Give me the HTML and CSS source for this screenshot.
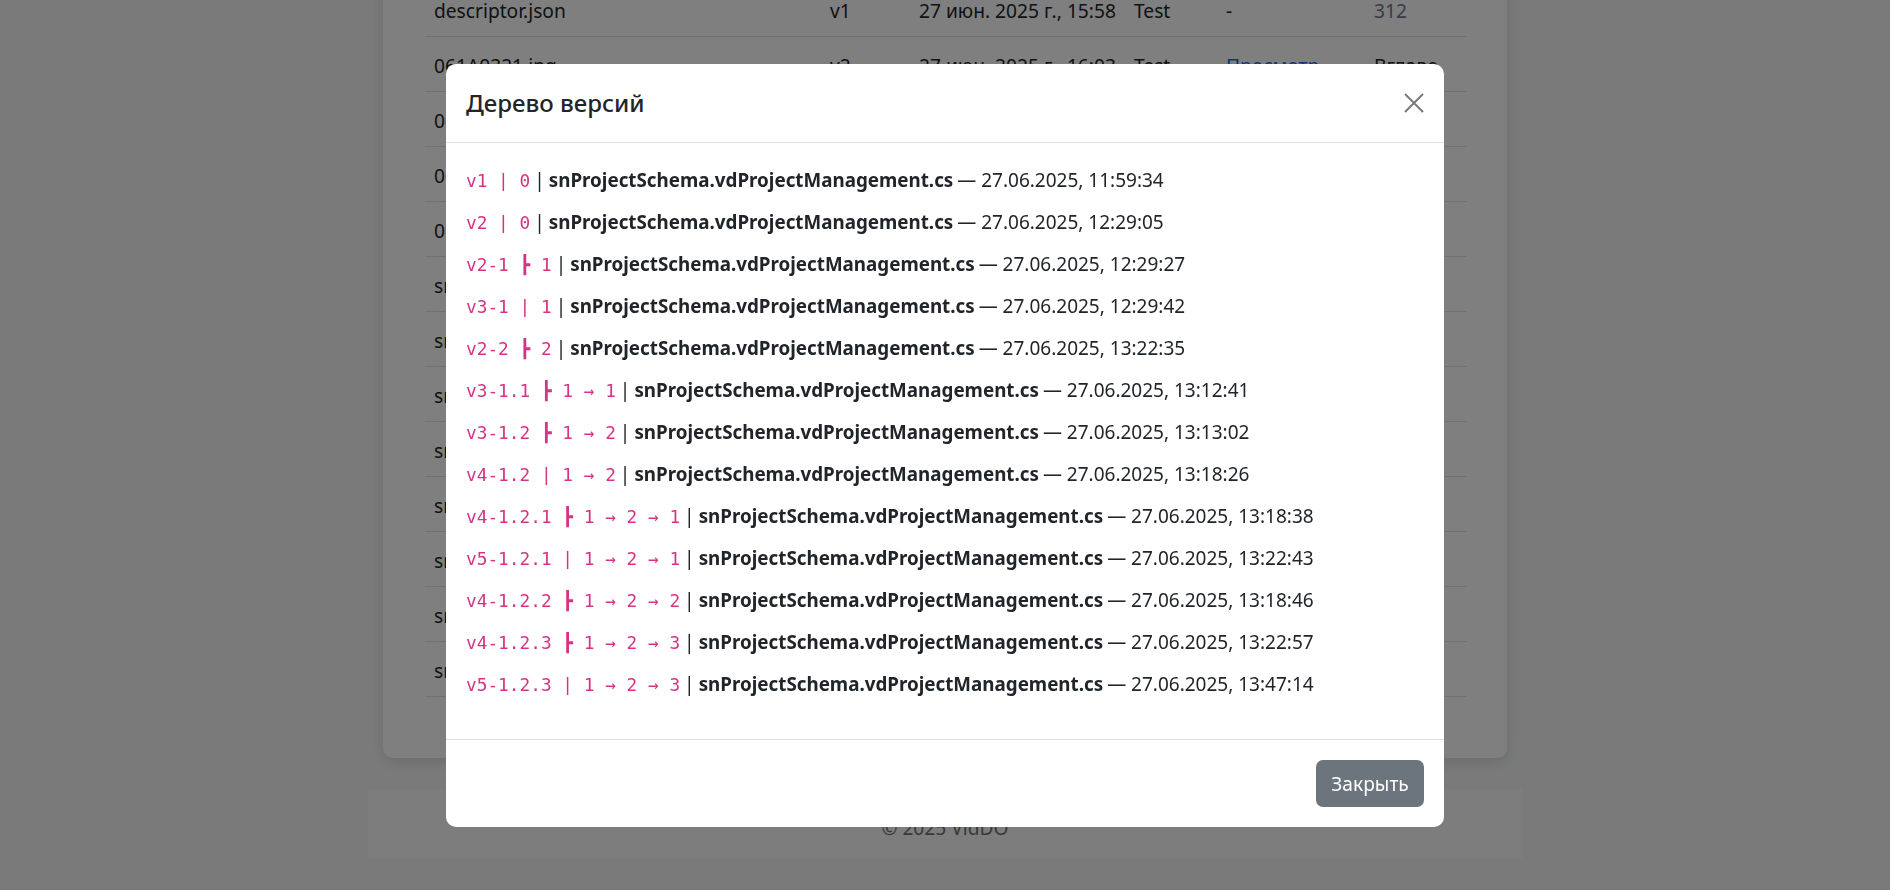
FILE: index.html
```html
<!DOCTYPE html>
<html lang="ru">
<head>
<meta charset="utf-8">
<title>Дерево версий</title>
<link rel="stylesheet" href="styles.css">
</head>
<body>
<div class="page">
  <div class="card">
    <div class="table">
      <div class="trow"><div class="c c1">descriptor.json</div><div class="c c2">v1</div><div class="c c3">27 июн. 2025 г., 15:58</div><div class="c c4">Test</div><div class="c c5">-</div><div class="c c6 muted">312</div></div>
      <div class="trow"><div class="c c1">061A0321.jpg</div><div class="c c2">v2</div><div class="c c3">27 июн. 2025 г., 16:03</div><div class="c c4">Test</div><div class="c c5"><span class="link">Просмотр</span></div><div class="c c6">Вглаво</div></div>
      <div class="trow"><div class="c c1">061A0322.jpg</div><div class="c c2">v1</div><div class="c c3">27 июн. 2025 г., 16:03</div><div class="c c4">Test</div><div class="c c5"><span class="link">Просмотр</span></div><div class="c c6">Вглаво</div></div>
      <div class="trow"><div class="c c1">061A0323.jpg</div><div class="c c2">v1</div><div class="c c3">27 июн. 2025 г., 16:03</div><div class="c c4">Test</div><div class="c c5"><span class="link">Просмотр</span></div><div class="c c6">Вглаво</div></div>
      <div class="trow"><div class="c c1">061A0324.jpg</div><div class="c c2">v1</div><div class="c c3">27 июн. 2025 г., 16:03</div><div class="c c4">Test</div><div class="c c5"><span class="link">Просмотр</span></div><div class="c c6">Вглаво</div></div>
      <div class="trow"><div class="c c1">snProjectSchema.vdProjectManagement.cs</div><div class="c c2">v1</div><div class="c c3">27 июн. 2025 г., 11:59</div><div class="c c4">Test</div><div class="c c5">-</div><div class="c c6">-</div></div>
      <div class="trow"><div class="c c1">snProjectSchema.vdProjectManagement.cs</div><div class="c c2">v2</div><div class="c c3">27 июн. 2025 г., 12:29</div><div class="c c4">Test</div><div class="c c5">-</div><div class="c c6">-</div></div>
      <div class="trow"><div class="c c1">snProjectSchema.vdProjectManagement.cs</div><div class="c c2">v2-1</div><div class="c c3">27 июн. 2025 г., 12:29</div><div class="c c4">Test</div><div class="c c5">-</div><div class="c c6">-</div></div>
      <div class="trow"><div class="c c1">snProjectSchema.vdProjectManagement.cs</div><div class="c c2">v3-1</div><div class="c c3">27 июн. 2025 г., 12:29</div><div class="c c4">Test</div><div class="c c5">-</div><div class="c c6">-</div></div>
      <div class="trow"><div class="c c1">snProjectSchema.vdProjectManagement.cs</div><div class="c c2">v2-2</div><div class="c c3">27 июн. 2025 г., 13:22</div><div class="c c4">Test</div><div class="c c5">-</div><div class="c c6">-</div></div>
      <div class="trow"><div class="c c1">snProjectSchema.vdProjectManagement.cs</div><div class="c c2">v3-1.1</div><div class="c c3">27 июн. 2025 г., 13:12</div><div class="c c4">Test</div><div class="c c5">-</div><div class="c c6">-</div></div>
      <div class="trow"><div class="c c1">snProjectSchema.vdProjectManagement.cs</div><div class="c c2">v3-1.2</div><div class="c c3">27 июн. 2025 г., 13:13</div><div class="c c4">Test</div><div class="c c5">-</div><div class="c c6">-</div></div>
      <div class="trow"><div class="c c1">snProjectSchema.vdProjectManagement.cs</div><div class="c c2">v4-1.2</div><div class="c c3">27 июн. 2025 г., 13:18</div><div class="c c4">Test</div><div class="c c5">-</div><div class="c c6">-</div></div>
    </div>
  </div>
  <footer class="footer">© 2025 VidDO</footer>
</div>

<div class="backdrop"></div>

<div class="modal">
  <div class="dialog">
    <div class="mheader">
      <h5 class="mtitle">Дерево версий</h5>
      <button class="close" type="button" aria-label="Close">
        <svg width="20" height="20" viewBox="0 0 20 20"><path d="M1 1L19 19M19 1L1 19" stroke="#7a7a7a" stroke-width="2" fill="none"/></svg>
      </button>
    </div>
    <div class="mbody">
      <div class="vrow"><code class="tag">v1 | 0</code> | <b>snProjectSchema.vdProjectManagement.cs</b> <span class="date">— 27.06.2025, 11:59:34</span></div>
      <div class="vrow"><code class="tag">v2 | 0</code> | <b>snProjectSchema.vdProjectManagement.cs</b> <span class="date">— 27.06.2025, 12:29:05</span></div>
      <div class="vrow"><code class="tag">v2-1 ┣ 1</code> | <b>snProjectSchema.vdProjectManagement.cs</b> <span class="date">— 27.06.2025, 12:29:27</span></div>
      <div class="vrow"><code class="tag">v3-1 | 1</code> | <b>snProjectSchema.vdProjectManagement.cs</b> <span class="date">— 27.06.2025, 12:29:42</span></div>
      <div class="vrow"><code class="tag">v2-2 ┣ 2</code> | <b>snProjectSchema.vdProjectManagement.cs</b> <span class="date">— 27.06.2025, 13:22:35</span></div>
      <div class="vrow"><code class="tag">v3-1.1 ┣ 1 → 1</code> | <b>snProjectSchema.vdProjectManagement.cs</b> <span class="date">— 27.06.2025, 13:12:41</span></div>
      <div class="vrow"><code class="tag">v3-1.2 ┣ 1 → 2</code> | <b>snProjectSchema.vdProjectManagement.cs</b> <span class="date">— 27.06.2025, 13:13:02</span></div>
      <div class="vrow"><code class="tag">v4-1.2 | 1 → 2</code> | <b>snProjectSchema.vdProjectManagement.cs</b> <span class="date">— 27.06.2025, 13:18:26</span></div>
      <div class="vrow"><code class="tag">v4-1.2.1 ┣ 1 → 2 → 1</code> | <b>snProjectSchema.vdProjectManagement.cs</b> <span class="date">— 27.06.2025, 13:18:38</span></div>
      <div class="vrow"><code class="tag">v5-1.2.1 | 1 → 2 → 1</code> | <b>snProjectSchema.vdProjectManagement.cs</b> <span class="date">— 27.06.2025, 13:22:43</span></div>
      <div class="vrow"><code class="tag">v4-1.2.2 ┣ 1 → 2 → 2</code> | <b>snProjectSchema.vdProjectManagement.cs</b> <span class="date">— 27.06.2025, 13:18:46</span></div>
      <div class="vrow"><code class="tag">v4-1.2.3 ┣ 1 → 2 → 3</code> | <b>snProjectSchema.vdProjectManagement.cs</b> <span class="date">— 27.06.2025, 13:22:57</span></div>
      <div class="vrow"><code class="tag">v5-1.2.3 | 1 → 2 → 3</code> | <b>snProjectSchema.vdProjectManagement.cs</b> <span class="date">— 27.06.2025, 13:47:14</span></div>
    </div>
    <div class="mfooter">
      <button class="btn" type="button">Закрыть</button>
    </div>
  </div>
</div>
</body>
</html>
```
FILE: styles.css
```css
* { box-sizing: border-box; }
html, body { margin: 0; padding: 0; height: 100%; overflow: hidden; }
body {
  background: #f4f5f6;
  font-family: "Noto Sans", "Open Sans", sans-serif;
  font-size: 19.2px;
  color: #212529;
}
.page {
  margin-top: -60px;
  display: flex;
  flex-direction: column;
  align-items: center;
}
.card {
  width: 1124px;
  background: #fff;
  border-radius: 10px;
  box-shadow: 0 4px 14px rgba(0,0,0,0.12);
  padding: 42px 40px 61px 42px;
}
.table { display: flex; flex-direction: column; }
.trow {
  display: grid;
  grid-template-columns: 396px 89px 215px 92px 148px 102px;
  height: 55px;
  align-items: center;
  border-bottom: 1px solid #dee2e6;
}
.c { padding-left: 9px; padding-top: 3px; white-space: nowrap; overflow: hidden; }
.link { color: #0d6efd; text-decoration: underline; }
.muted { color: #6a7890; }
.footer {
  margin-top: 31px;
  width: 1154px;
  height: 69px;
  background: #fafbfb;
  display: flex;
  align-items: center;
  justify-content: center;
  color: #6c757d;
  padding-top: 8px;
}
.backdrop {
  position: fixed;
  inset: 0;
  background: rgba(0,0,0,0.5);
}
.modal {
  position: fixed;
  inset: 0;
  display: flex;
  justify-content: center;
  align-items: flex-start;
  padding-top: 64px;
}
.dialog {
  width: 998px;
  background: #fff;
  border-radius: 10px;
  display: flex;
  flex-direction: column;
}
.mheader {
  display: flex;
  align-items: center;
  justify-content: space-between;
  padding: 20px 20px 21px;
  border-bottom: 1px solid #dee2e6;
}
.mtitle {
  margin: 0;
  font-size: 24px;
  line-height: 37px;
  font-weight: 500;
}
.close {
  width: 20px;
  height: 20px;
  padding: 0;
  border: 0;
  background: none;
  display: flex;
}
.mbody { padding: 19px 20px 31px; }
.vrow {
  height: 35px;
  line-height: 35px;
  margin-bottom: 7px;
  white-space: nowrap;
  word-spacing: -1px;
}
.vrow b { font-weight: 700; font-size: 18.8px; word-spacing: 0; }
.date { font-size: 19px; word-spacing: 0; }
.tag {
  font-family: "DejaVu Sans Mono", "Liberation Mono", monospace;
  font-size: 17.8px;
  line-height: 1;
  color: #d63384;
  word-spacing: 0;
}
.mfooter {
  display: flex;
  justify-content: flex-end;
  padding: 20px;
  border-top: 1px solid #dee2e6;
}
.btn {
  width: 108px;
  height: 47px;
  border: 0;
  border-radius: 7px;
  background: #6c757d;
  color: #fff;
  font-family: "Noto Sans", "Open Sans", sans-serif;
  font-size: 19.2px;
  padding: 0;
}
```
